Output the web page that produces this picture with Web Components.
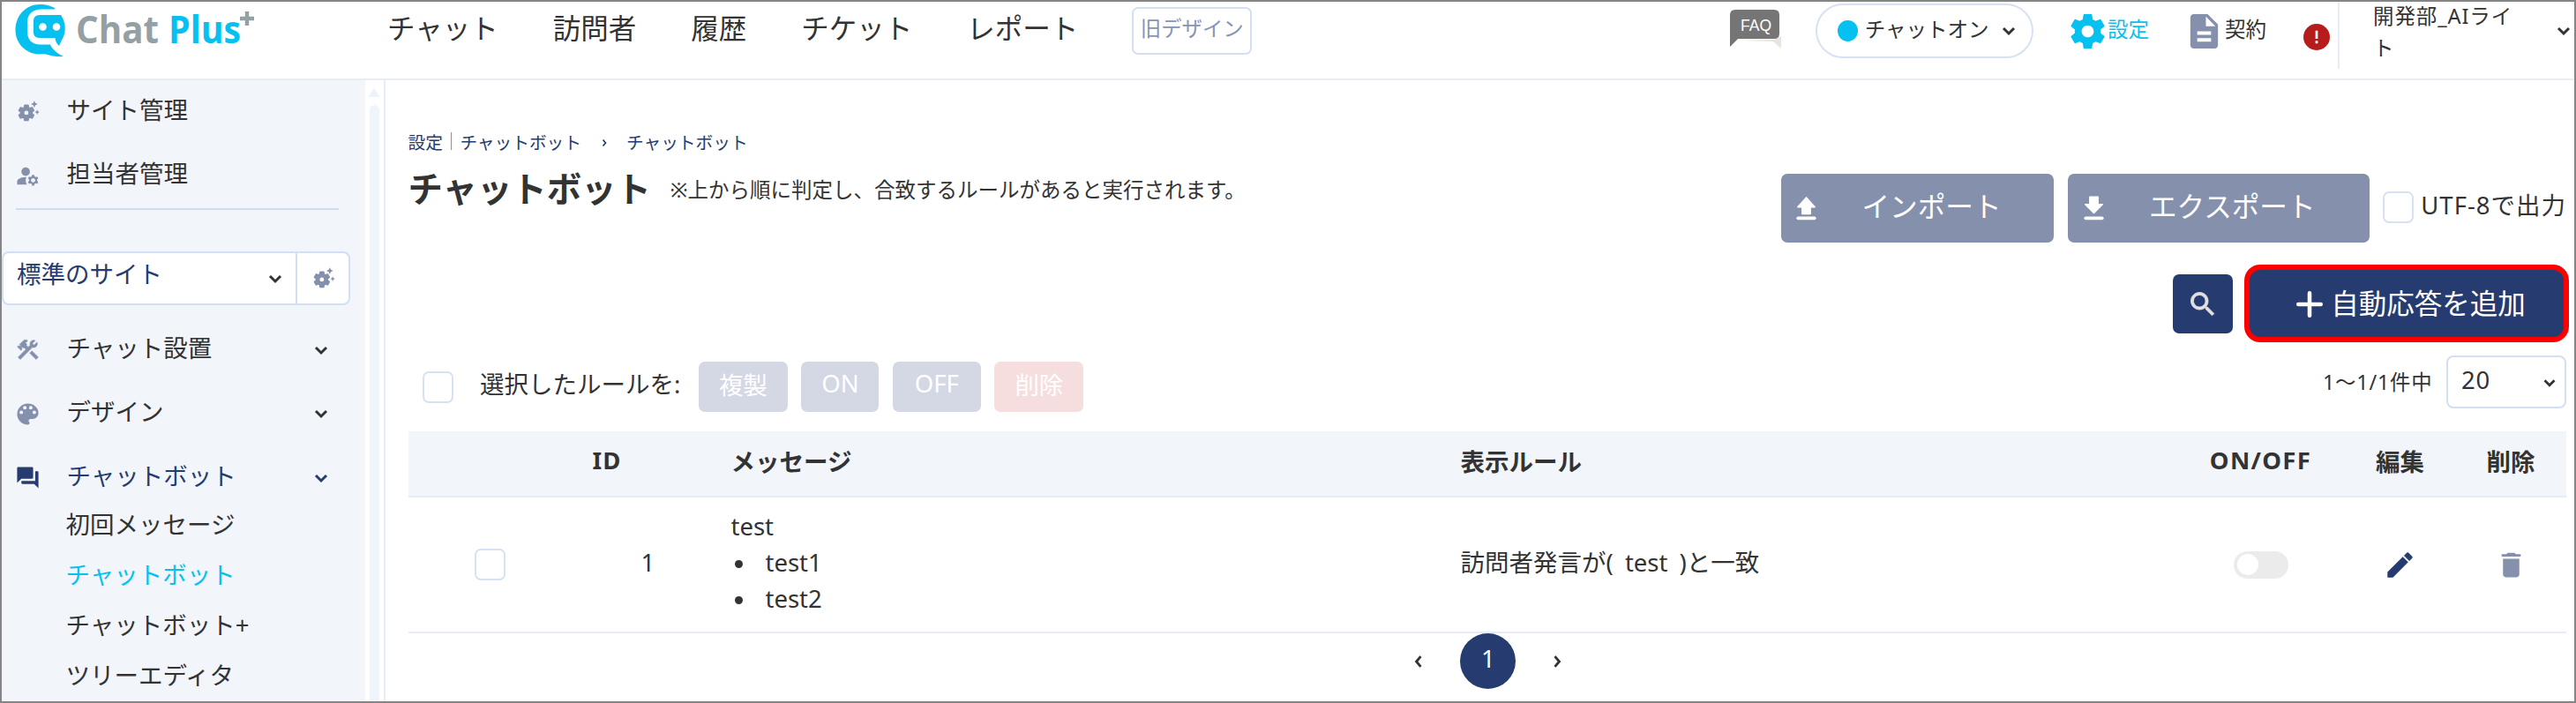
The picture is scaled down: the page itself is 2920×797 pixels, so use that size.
<!DOCTYPE html>
<html lang="ja">
<head>
<meta charset="UTF-8">
<title>チャットボット</title>
<style>
html, body {
  margin: 0;
  height: 100%;
  overflow: hidden;
}
body {
  color: #333333;
  background-color: #ffffff;
  font-family: "Noto Sans", "Noto Sans CJK JP", sans-serif;
  font-size: 27.5px;
}
</style>
</head>
<body>
<chat-app></chat-app>

<script>
const GEAR = "M19.43 12.98c.04-.32.07-.64.07-.98s-.03-.66-.07-.98l2.11-1.65c.19-.15.24-.42.12-.64l-2-3.46c-.12-.22-.39-.3-.61-.22l-2.49 1c-.52-.4-1.08-.73-1.69-.98l-.38-2.65C14.46 2.18 14.25 2 14 2h-4c-.25 0-.46.18-.49.42l-.38 2.65c-.61.25-1.17.59-1.69.98l-2.49-1c-.23-.09-.49 0-.61.22l-2 3.46c-.13.22-.07.49.12.64l2.11 1.65c-.04.32-.07.65-.07.98s.03.66.07.98l-2.11 1.65c-.19.15-.24.42-.12.64l2 3.46c.12.22.39.3.61.22l2.49-1c.52.4 1.08.73 1.69.98l.38 2.65c.03.24.24.42.49.42h4c.25 0 .46-.18.49-.42l.38-2.65c.61-.25 1.17-.59 1.69-.98l2.49 1c.23.09.49 0 .61-.22l2-3.46c.12-.22.07-.49-.12-.64l-2.11-1.65zM12 15.5c-1.93 0-3.5-1.57-3.5-3.5s1.57-3.5 3.5-3.5 3.5 1.57 3.5 3.5-1.57 3.5-3.5 3.5z";

const ICONS = {
  settings: `<path d="${GEAR}"/>`,
  suggest: `<path transform="translate(1.9 4.4) scale(.73)" d="${GEAR}" stroke="currentColor" stroke-width="1.400" stroke-linejoin="round"/><path d="M18.100 1.800l1 2.200 2.200 1-2.200 1-1 2.200-1-2.200-2.200-1 2.200-1zM20.800 10.200l.7 1.600 1.600.7-1.600.7-.7 1.600-.7-1.600-1.600-.7 1.600-.7z"/>`,
  accounts: `<path d="M10.670 13.020C10.450 13.010 10.230 13 10 13c-2.420 0-4.680.67-6.610 1.820C2.510 15.340 2 16.320 2 17.350V20h9.260C10.470 18.870 10 17.490 10 16c0-1.070.25-2.070.67-2.980z"/><circle cx="10" cy="8" r="4"/><path d="M20.750 16c0-.22-.03-.42-.06-.63l1.140-1.010-1-1.730-1.450.49c-.32-.27-.68-.48-1.080-.63L18 11h-2l-.3 1.490c-.4.15-.76.36-1.080.63l-1.450-.49-1 1.730 1.140 1.010c-.03.21-.06.41-.06.63s.03.42.06.63l-1.140 1.010 1 1.730 1.450-.49c.32.27.68.48 1.080.63L16 21h2l.3-1.490c.4-.15.76-.36 1.080-.63l1.450.49 1-1.730-1.140-1.010c.03-.21.06-.41.06-.63zM17 18c-1.100 0-2-.9-2-2s.9-2 2-2 2 .9 2 2-.9 2-2 2z"/>`,
  tools: `<path d="M13.780 15.170l2.120-2.120 6 6-2.120 2.120zM17.500 10c1.930 0 3.500-1.570 3.500-3.500 0-.58-.16-1.120-.41-1.600l-2.700 2.700-1.490-1.490 2.700-2.700c-.48-.25-1.020-.41-1.600-.41C15.570 3 14 4.570 14 6.500c0 .41.08.8.21 1.160l-1.850 1.850-1.780-1.780.71-.71-1.410-1.410L12 3.490c-1.170-1.170-3.070-1.170-4.240 0L4.220 7.030l1.410 1.410H2.810l-.71.71 3.540 3.540.71-.71V9.150l1.410 1.410.71-.71 1.780 1.780-7.410 7.410 2.120 2.120L16.340 9.790c.36.13.75.21 1.160.21z" stroke="currentColor" stroke-width=".4"/>`,
  palette: `<path transform="translate(-1.300 -1.300) scale(1.110)" d="M12 3c-4.970 0-9 4.030-9 9s4.030 9 9 9c.83 0 1.500-.67 1.500-1.500 0-.39-.15-.74-.39-1.010-.23-.26-.38-.61-.38-.99 0-.83.67-1.500 1.500-1.500H16c2.760 0 5-2.240 5-5 0-4.420-4.030-8-9-8zm-5.500 9c-.83 0-1.500-.67-1.500-1.500S5.670 9 6.500 9 8 9.670 8 10.500 7.330 12 6.500 12zm3-4C8.670 8 8 7.330 8 6.500S8.670 5 9.500 5s1.500.67 1.500 1.500S10.330 8 9.500 8zm5 0c-.83 0-1.500-.67-1.500-1.500S13.670 5 14.500 5s1.500.67 1.500 1.500S15.330 8 14.500 8zm3 4c-.83 0-1.500-.67-1.500-1.500S16.670 9 17.500 9s1.500.67 1.500 1.500-.67 1.500-1.500 1.500z"/>`,
  bubbles: `<path d="M21 6h-2v9H6v2c0 .55.45 1 1 1h11l4 4V7c0-.55-.45-1-1-1zm-4 6V3c0-.55-.45-1-1-1H3c-.55 0-1 .45-1 1v14l4-4h10c.55 0 1-.45 1-1z"/>`,
  document: `<path d="M14 2H6c-1.100 0-1.990.9-1.990 2L4 20c0 1.100.89 2 1.990 2H18c1.100 0 2-.9 2-2V8l-6-6zm2 16H8v-2h8v2zm0-4H8v-2h8v2zm-3-5V3.500L18.500 9H13z"/>`,
  upload: `<path d="M12 4.500L18.300 11.500H15V16.500H9V11.500H5.700z" stroke="currentColor" stroke-width="1" stroke-linejoin="round"/><path d="M6 19.700H18" stroke="currentColor" stroke-width="2.400" stroke-linecap="round"/>`,
  download: `<path d="M12 15.800L5.700 9.500H9V4H15V9.500H18.300z" stroke="currentColor" stroke-width="1" stroke-linejoin="round"/><path d="M6 19.700H18" stroke="currentColor" stroke-width="2.400" stroke-linecap="round"/>`,
  search: `<path d="M15.500 14h-.79l-.28-.27C15.410 12.590 16 11.110 16 9.500 16 5.910 13.090 3 9.500 3S3 5.910 3 9.500 5.910 16 9.500 16c1.610 0 3.090-.59 4.230-1.570l.27.28v.79l5 4.990L20.490 19l-4.990-5zm-6 0C7.010 14 5 11.990 5 9.500S7.010 5 9.500 5 14 7.010 14 9.500 11.990 14 9.500 14z" stroke="currentColor" stroke-width=".6"/>`,
  plus: `<path d="M12 3V21M3 12H21" stroke="currentColor" stroke-width="3.200" stroke-linecap="round"/>`,
  edit: `<path d="M3 17.250V21h3.750L17.810 9.940l-3.750-3.750L3 17.250zM20.710 7.040c.39-.39.39-1.020 0-1.410l-2.340-2.340c-.39-.39-1.020-.39-1.410 0l-1.830 1.830 3.750 3.750 1.830-1.830z" stroke="currentColor" stroke-width=".4"/>`,
  trash: `<path d="M6 19c0 1.100.9 2 2 2h8c1.100 0 2-.9 2-2V7.500H6V19zM19 4h-3.500l-1-1h-5l-1 1H5v1.800h14V4z"/>`,
  down: `<path d="M6 9L12 15L18 9" fill="none" stroke="currentColor" stroke-width="3"/>`,
  left: `<path d="M15 5L9 12L15 19" fill="none" stroke="currentColor" stroke-width="3.400"/>`,
  right: `<path d="M9 5L15 12L9 19" fill="none" stroke="currentColor" stroke-width="3.400"/>`,
  alert: `<circle cx="12" cy="12" r="12" fill="#b71c1c"/><path d="M10.900 6.200h2.200v7.300h-2.200zM10.900 15.300h2.200v2.400h-2.200z" fill="#ffffff"/>`
};

// Attaches an open shadow root holding the given markup
function define(name, html) {
  const template = document.createElement("template");
  window.customElements.define(
    name,
    class extends HTMLElement {
      constructor() {
        super();
        template.innerHTML = typeof html === "function" ? html(this) : html;
        this.attachShadow({ mode: "open" })
          .appendChild(template.content.cloneNode(true));
      }
    }
  );
}

define("app-icon", (el) => `
<style>
:host { display: block; flex: none; width: 29px; height: 29px; }
svg { display: block; width: 100%; height: 100%; overflow: visible; }
</style>
<svg viewBox="0 0 24 24" fill="currentColor">${ICONS[el.getAttribute("name")] || ""}</svg>
`);

define("chat-logo", `
<style>
:host { display: block; flex: none; width: 290px; height: 72px; }
svg { display: block; }
text { font-family: "Open Sans", sans-serif; font-weight: 700; }
</style>
<svg width="290" height="72" viewBox="2 2 290 72">
  <path fill="#06c1f0" d="M62 9C54 5 49 5 45 5C29 5 17.500 18 17.500 34C17.500 50 30 61 44 61.500C47 61.500 49 61 52 61.500C58 63.500 65 64.500 72 64C65 60.500 59 56 57 50.500H46C36 50.500 31 45 31 36V25C31 16 37 10.500 47 10.500H62z"/>
  <path fill="#06c1f0" d="M45 17H69C74 24 74.500 33 73 38.500C72 42 69 47 67 52C64 49 62.500 46 62.500 43H45C40 43 38 40 38 37V24C38 20 40 17 45 17z"/>
  <circle cx="48.500" cy="30.500" r="4.300" fill="#ffffff"/>
  <circle cx="64" cy="30.500" r="4.300" fill="#ffffff"/>
  <text x="86" y="49" font-size="43" fill="#95a0a5" textLength="94" lengthAdjust="spacingAndGlyphs">Chat</text>
  <text x="191" y="49" font-size="43" fill="#06c1f0" textLength="82" lengthAdjust="spacingAndGlyphs">Plus</text>
  <path d="M272 21H288M280 13V29" stroke="#95a0a5" stroke-width="4.400"/>
</svg>
`);

define("faq-bubble", `
<style>
:host { display: block; flex: none; width: 58px; height: 45px; }
svg { display: block; }
text { font-family: "Liberation Sans", sans-serif; }
</style>
<svg width="58" height="45" viewBox="0 0 58 45">
  <path fill="#e8e6dc" d="M10 35L49 36L58 44V30L50 34z"/>
  <path fill="#757575" d="M0 6Q0 0 6 0H50Q56 0 56 6V27Q56 33 50 33H9L0 42z"/>
  <text x="12" y="24" font-size="18.500" fill="#ffffff" textLength="35" lengthAdjust="spacingAndGlyphs">FAQ</text>
</svg>
`);

define("check-box", `
<style>
:host {
  display: block;
  flex: none;
  box-sizing: border-box;
  width: 35px;
  height: 36px;
  border: 2px solid #d8e1f2;
  border-radius: 7px;
  background: #ffffff;
}
</style>
`);

define("toggle-switch", `
<style>
:host {
  display: flex;
  align-items: center;
  box-sizing: border-box;
  width: 62px;
  height: 31px;
  padding-left: 4px;
  border-radius: 16px;
  background: #ebebeb;
}
span { width: 24px; height: 24px; border-radius: 50%; background: #ffffff; }
</style>
<span></span>
`);

define("app-button", `
<style>
:host {
  display: flex;
  flex: none;
  align-items: center;
  justify-content: center;
  box-sizing: border-box;
  border-radius: 7px;
  color: #ffffff;
  background: #8590ad;
  white-space: nowrap;
}
:host([kind="navy"]) { background: #263c70; }
:host([kind="muted"]) { background: #d3d8e4; height: 57px; padding-bottom: 8px; }
:host([kind="danger"]) { background: #f6dede; height: 57px; padding-bottom: 8px; }
</style>
<slot></slot>
`);

define("app-header", `
<style>
:host {
  display: flex;
  flex: none;
  align-items: flex-start;
  box-sizing: border-box;
  height: 89px;
  border-bottom: 2px solid #e6ecf8;
  line-height: 36px;
  white-space: nowrap;
}
nav {
  display: flex;
  gap: 62px;
  margin-left: 147px;
  padding-top: 12px;
  font-size: 31.5px;
}
.old {
  box-sizing: border-box;
  width: 136px;
  height: 54px;
  margin: 6px 0 0 61px;
  padding-top: 4px;
  border: 2px solid #d3dff2;
  border-radius: 7px;
  color: #8794b5;
  font-size: 23.4px;
  text-align: center;
}
.tools {
  display: flex;
  flex: 1;
  justify-content: flex-end;
  font-size: 23.5px;
}
faq-bubble { margin: 9px 39px 0 0; }
.state {
  display: flex;
  align-items: center;
  box-sizing: border-box;
  width: 247px;
  height: 62px;
  margin-top: 2px;
  padding: 0 14px 4px 23px;
  border: 2px solid #d8e1f4;
  border-radius: 31px;
}
.dot { width: 24px; height: 24px; margin: 4px 8px 0 0; border-radius: 50%; background: #06c1f0; }
.state app-icon { width: 24px; height: 24px; margin: 4px 0 0 10px; }
.link { display: flex; align-items: center; height: 62px; padding-top: 2px; }
.link span { padding-bottom: 4px; }
.link app-icon { width: 47px; height: 47px; }
.set { margin-left: 38px; color: #06c1f0; }
.set app-icon { margin-right: -.5px; }
.bill { margin-left: 39px; }
.bill app-icon { color: #8590ad; }
.alert { width: 30px; height: 30px; margin: 25px 9px 0 42px; }
.user {
  display: flex;
  box-sizing: border-box;
  width: 268px;
  height: 76px;
  padding-left: 38px;
  border-left: 2px solid #e6ecf8;
}
.user span { width: 168px; margin-top: -1px; white-space: normal; line-height: 35.500px; letter-spacing: .9px; word-break: break-all; }
.user app-icon { width: 24px; height: 24px; margin: 21px 0 0 41px; }
</style>
<chat-logo></chat-logo>
<nav>
  <span>チャット</span>
  <span>訪問者</span>
  <span>履歴</span>
  <span>チケット</span>
  <span>レポート</span>
</nav>
<div class="old">旧デザイン</div>
<div class="tools">
  <faq-bubble></faq-bubble>
  <div class="state"><i class="dot"></i><span>チャットオン</span><app-icon name="down"></app-icon></div>
  <div class="link set"><app-icon name="settings"></app-icon><span>設定</span></div>
  <div class="link bill"><app-icon name="document"></app-icon><span>契約</span></div>
  <app-icon class="alert" name="alert"></app-icon>
  <div class="user"><span>開発部_AIライト</span><app-icon name="down"></app-icon></div>
</div>
`);

define("side-item", (el) => `
<style>
:host {
  display: flex;
  flex: none;
  align-items: center;
  box-sizing: border-box;
  height: 72.500px;
  padding: 0 38px 7px 14.600px;
  white-space: nowrap;
}
:host([active]) { margin-bottom: -9px; color: #263c70; }
:host([sub]) { height: 56.800px; padding-left: 72.500px; }
:host([current]) { color: #06c1f0; }
app-icon { margin: 8px 30px 0 0; color: #8590ad; }
:host([active]) app-icon { color: #263c70; }
span { flex: 1; }
.arrow { width: 24px; height: 24px; margin: 8px 0 0; color: #333333; }
</style>
${el.hasAttribute("icon") ? `<app-icon name="${el.getAttribute("icon")}"></app-icon>` : ""}
<span><slot></slot></span>
${el.hasAttribute("fold") ? `<app-icon class="arrow" name="down"></app-icon>` : ""}
`);

define("side-menu", `
<style>
:host { display: flex; flex: none; width: 432.500px; border-right: 2px solid #e6ecf8; overflow: hidden; }
.menu {
  display: flex;
  flex-direction: column;
  width: 412px;
  background: #f2f5fa;
}
.menu side-item:first-child { margin-top: -1px; }
hr { flex: none; width: 366px; height: 2px; margin: 1px 0 47px 16px; border: 0; background: #cfdcf0; }
.site {
  display: flex;
  flex: none;
  box-sizing: border-box;
  width: 395px;
  height: 61px;
  margin-bottom: 14px;
  border: 2px solid #d3dff2;
  border-radius: 8px;
  background: #ffffff;
  color: #263c70;
}
.name { display: flex; flex: 1; align-items: center; padding: 0 9px 13px 15px; border-right: 2px solid #d3dff2; }
.name span { flex: 1; }
.name app-icon { width: 24px; height: 24px; margin: 14px 2px 0 0; color: #333333; }
.gear { display: flex; align-items: center; justify-content: center; width: 58px; color: #8590ad; }
.bar { display: flex; flex: 1; flex-direction: column; align-items: center; background: #ffffff; }
.bar i { width: 0; margin: 9px 0; border: 7px solid transparent; border-top: 0; border-bottom: 10px solid #eef2fa; }
.bar b { flex: 1; width: 11px; border-radius: 6px 6px 0 0; background: #f0f4fb; }
</style>
<div class="menu">
  <side-item icon="suggest">サイト管理</side-item>
  <side-item icon="accounts">担当者管理</side-item>
  <hr>
  <div class="site">
    <div class="name"><span>標準のサイト</span><app-icon name="down"></app-icon></div>
    <div class="gear"><app-icon name="suggest"></app-icon></div>
  </div>
  <side-item icon="tools" fold>チャット設置</side-item>
  <side-item icon="palette" fold>デザイン</side-item>
  <side-item icon="bubbles" active fold>チャットボット</side-item>
  <side-item sub>初回メッセージ</side-item>
  <side-item sub current>チャットボット</side-item>
  <side-item sub>チャットボット+</side-item>
  <side-item sub>ツリーエディタ</side-item>
</div>
<div class="bar"><i></i><b></b></div>
`);

define("rule-table", `
<style>
:host { display: block; }
.row {
  display: grid;
  grid-template-columns: 366px 827px 812px 190px 126px 125px;
  align-items: center;
  box-sizing: border-box;
  border-bottom: 2px solid #e6ecf8;
  white-space: nowrap;
}
.head { height: 75px; padding-bottom: 8px; background: #f2f5fa; font-weight: 700; }
.body { height: 154px; }
.first { display: flex; align-items: center; }
.head .first { padding-left: 209px; letter-spacing: 1px; }
.body .first { padding: 0 0 4px 75px; }
.first span { margin: -2px 0 0 154px; }
.first check-box { margin-top: 4px; }
.mid { display: flex; justify-content: center; }
.msg { line-height: 41px; padding-bottom: 5px; }
ul { margin: 0; padding-left: 39px; list-style: none; }
li::before { content: ""; display: inline-block; width: 9px; height: 9px; margin: 0 26px 4px -35px; border-radius: 50%; background: #333333; }
.rule { padding-bottom: 8px; word-spacing: 6px; }
.wide { letter-spacing: 1.300px; }
.body app-icon { width: 37px; height: 37px; }
</style>
<div class="row head">
  <div class="first">ID</div>
  <div>メッセージ</div>
  <div>表示ルール</div>
  <div class="mid wide">ON/OFF</div>
  <div class="mid">編集</div>
  <div class="mid">削除</div>
</div>
<div class="row body">
  <div class="first"><check-box></check-box><span>1</span></div>
  <div class="msg">test<ul><li>test1</li><li>test2</li></ul></div>
  <div class="rule">訪問者発言が( test )と一致</div>
  <div class="mid"><toggle-switch></toggle-switch></div>
  <div class="mid"><app-icon name="edit" style="color: #263c70"></app-icon></div>
  <div class="mid"><app-icon name="trash" style="color: #8590ad"></app-icon></div>
</div>
`);

define("page-nav", `
<style>
:host { display: flex; align-items: center; justify-content: center; gap: 35px; padding-left: 2px; }
b {
  box-sizing: border-box;
  width: 63px;
  height: 63px;
  border-radius: 50%;
  background: #263c70;
  color: #ffffff;
  font-weight: 400;
  line-height: 57px;
  text-align: center;
}
app-icon { width: 24px; height: 20px; }
</style>
<app-icon name="left"></app-icon>
<b>1</b>
<app-icon name="right"></app-icon>
`);

define("bot-page", `
<style>
:host { display: block; flex: 1; min-width: 0; padding: 50px 9px 0 26px; white-space: nowrap; }
.path { display: flex; align-items: center; box-sizing: border-box; height: 42px; padding-bottom: 4px; color: #263c70; font-size: 19.700px; }
.path i { width: 1.500px; height: 20px; margin: 0 9px; background: #8590ad; }
.path app-icon { width: 12px; height: 12px; margin: 3px 19px 0 20px; }
.title { display: flex; align-items: flex-start; height: 117px; }
h1 { margin: 6px 22px 0 0; font-size: 39.400px; line-height: 50px; }
.note { flex: 1; margin-top: 15px; font-size: 23.500px; line-height: 34px; }
.title app-button { height: 78px; margin: 14px 15.500px 0 0; font-size: 31.600px; padding-bottom: 8px; }
.title app-button app-icon { width: 37px; height: 37px; margin-top: 6px; }
.in { width: 309.500px; padding-right: 50px; }
.in app-icon { margin-right: 45px; }
.out { width: 342px; padding-right: 50px; }
.out app-icon { margin-right: 44px; }
.title check-box { margin: 34px 8px 0 0; }
.utf { margin: 31px 0 0; line-height: 38px; letter-spacing: 1px; }
.add { display: flex; align-items: center; justify-content: flex-end; gap: 13.500px; height: 88px; margin-right: -3px; }
.add .find { width: 67.500px; height: 67px; }
.add .find app-icon { width: 36px; height: 36px; color: #e0e0e0; margin: 2px 0 0 1px; }
.add .new { width: 368px; height: 88px; border: 6px solid #ff0000; border-radius: 18px; font-size: 31.500px; padding-bottom: 5px; padding-left: 8px; }
.add .new app-icon { width: 34px; height: 34px; margin: 6px 7px 0 0; }
.bulk { display: flex; align-items: center; gap: 15.500px; height: 101px; padding-left: 16px; }
.bulk .label { margin: -9px 5px 0 15px; }
.wide { letter-spacing: .8px; }
.count { flex: 1; text-align: right; font-size: 23.400px; margin-top: -14px; letter-spacing: .8px; }
.size {
  display: flex;
  align-items: center;
  justify-content: space-between;
  box-sizing: border-box;
  width: 136px;
  height: 60px;
  margin-top: -11px;
  padding: 0 4px 5px 15px;
  border: 2px solid #d3dff2;
  border-radius: 8px;
}
.size app-icon { width: 22px; height: 22px; margin: 6px 2px 0 0; }
</style>
<div class="path"><span>設定</span><i></i><span>チャットボット</span><app-icon name="right"></app-icon><span>チャットボット</span></div>
<div class="title">
  <h1>チャットボット</h1>
  <div class="note">※上から順に判定し、合致するルールがあると実行されます。</div>
  <app-button class="in"><app-icon name="upload"></app-icon>インポート</app-button>
  <app-button class="out"><app-icon name="download"></app-icon>エクスポート</app-button>
  <check-box></check-box>
  <span class="utf">UTF-8で出力</span>
</div>
<div class="add">
  <app-button class="find" kind="navy"><app-icon name="search"></app-icon></app-button>
  <app-button class="new" kind="navy"><app-icon name="plus"></app-icon>自動応答を追加</app-button>
</div>
<div class="bulk">
  <check-box></check-box>
  <span class="label">選択したルールを:</span>
  <app-button kind="muted" style="width: 101px">複製</app-button>
  <app-button kind="muted" style="width: 88px">ON</app-button>
  <app-button kind="muted" style="width: 100px">OFF</app-button>
  <app-button kind="danger" style="width: 101px">削除</app-button>
  <span class="count">1〜1/1件中</span>
  <div class="size"><span class="wide">20</span><app-icon name="down"></app-icon></div>
</div>
<rule-table></rule-table>
<page-nav></page-nav>
`);

define("chat-app", `
<style>
:host {
  display: flex;
  flex-direction: column;
  box-sizing: border-box;
  width: 2920px;
  height: 797px;
  border: 2px solid #858585;
  overflow: hidden;
}
.main { display: flex; flex: 1; min-height: 0; }
</style>
<app-header></app-header>
<div class="main">
  <side-menu></side-menu>
  <bot-page></bot-page>
</div>
`);
</script>
</body>
</html>
